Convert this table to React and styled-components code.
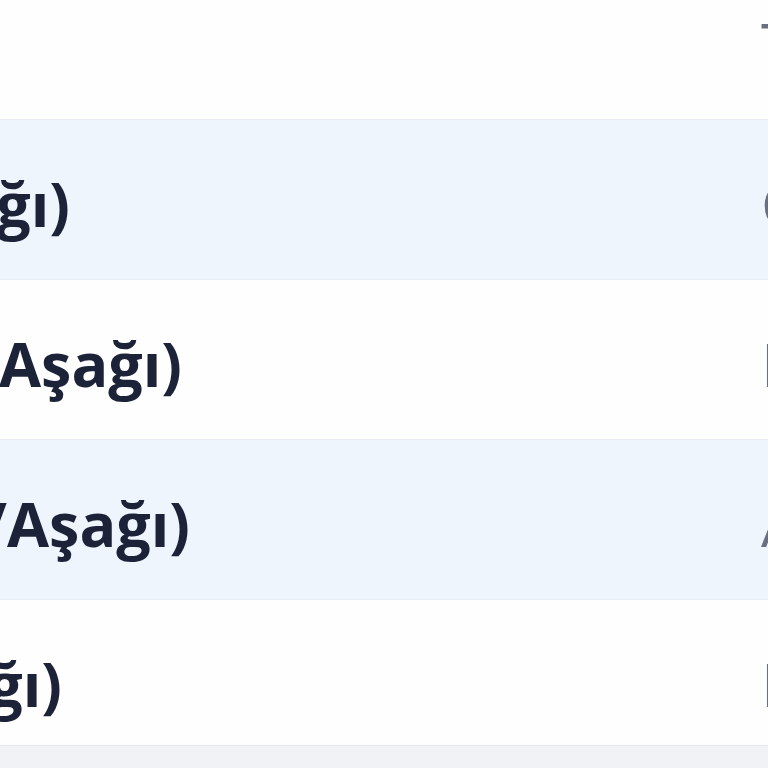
import React from 'react'
import styled, { createGlobalStyle } from 'styled-components'

const GlobalStyle = createGlobalStyle`
  html, body {
    margin: 0;
    padding: 0;
    background: #fefefe;
    overflow: hidden;
  }
  body {
    font-family: "Open Sans", "Noto Sans", "DejaVu Sans", sans-serif;
  }
`

const rows = [
  { label: '', end: 0, value: 'Tuş' },
  { label: 'Ses Seviyesi (Yukarı/Aşağı)', end: 70, value: 'Ctrl' },
  { label: 'Parlaklık (Aşağı)', end: 182, value: 'Fn' },
  { label: 'Kanal (Yukarı/Aşağı)', end: 190, value: 'Alt' },
  { label: 'Sayfa (Yukarı/Aşağı)', end: 62, value: 'Fn' },
]

const App = () => {
  return (
    <>
      <GlobalStyle />
      <Page>
        <TableFrame>
          <Table>
            {rows.map((row, i) => (
              <Row key={i} $striped={i % 2 === 1}>
                <LabelCell>
                  <Label $end={row.end}>{row.label}</Label>
                </LabelCell>
                <ValueCell>{row.value}</ValueCell>
              </Row>
            ))}
          </Table>
        </TableFrame>
        <Footer />
      </Page>
    </>
  )
}

export default App

const Page = styled.div`
  width: 768px;
  height: 768px;
  display: flex;
  flex-direction: column;
  overflow: hidden;
`

const TableFrame = styled.div`
  height: 745px;
  overflow: hidden;
  flex: none;
`

const Table = styled.div`
  display: flex;
  flex-direction: column;
  margin-top: -40px;
`

const Row = styled.div`
  display: flex;
  align-items: center;
  height: 160px;
  box-sizing: border-box;
  padding-top: 8px;
  background: ${(p) => (p.$striped ? '#eef5fd' : '#fefefe')};
  border-bottom: 1px solid #e7edf4;
  color: #1c2238;
  font-size: 61px;
  font-weight: 700;
  line-height: 1.2;
  white-space: nowrap;
`

const LabelCell = styled.div`
  flex: none;
  width: 761px;
`

const Label = styled.div`
  display: flex;
  justify-content: flex-end;
  width: ${(p) => p.$end}px;
`

const ValueCell = styled.div`
  flex: 1;
  font-weight: 400;
  color: #6b7080;
`

const Footer = styled.div`
  flex: 1;
  background: #f0f2f5;
  border-top: 1px solid #e4e8ee;
`
